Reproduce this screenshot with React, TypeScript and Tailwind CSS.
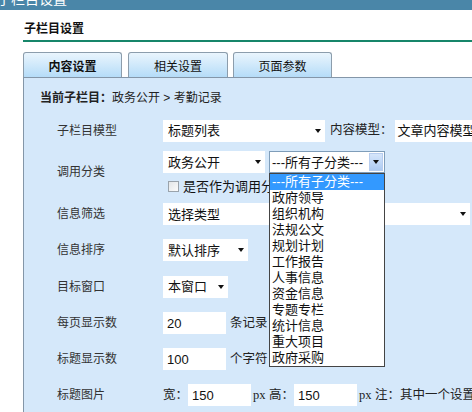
import React from "react";

const Arrow = () => (
  <span className="inline-block shrink-0 w-0 h-0 border-l-[3.5px] border-r-[3.5px] border-t-[4px] border-l-transparent border-r-transparent border-t-[#111]" />
);

function Sel({ w, text }: { w: string; text: string }) {
  return (
    <div className={`${w} shrink-0 h-[22px] bg-white flex items-center justify-between pl-[5px] pr-[4px] text-[13px] text-[#111] leading-none whitespace-nowrap`}>
      <span>{text}</span>
      <Arrow />
    </div>
  );
}

function Inp({ w, text }: { w: string; text: string }) {
  return (
    <div className={`${w} shrink-0 h-[22px] bg-white flex items-center pl-[4px] text-[13px] text-[#111] leading-none`}>
      {text}
    </div>
  );
}

function Row({ h, label, children }: { h: string; label: string; children: React.ReactNode }) {
  return (
    <div className={`${h} flex items-center`}>
      <div className="w-[139px] shrink-0 pl-[33px] text-[12px] text-[#333] leading-none whitespace-nowrap">{label}</div>
      <div className="flex items-center shrink-0">{children}</div>
    </div>
  );
}

const items = [
  "政府领导",
  "组织机构",
  "法规公文",
  "规划计划",
  "工作报告",
  "人事信息",
  "资金信息",
  "专题专栏",
  "统计信息",
  "重大项目",
  "政府采购",
];

const txt = "shrink-0 text-[12.5px] text-[#222] leading-none whitespace-nowrap";

export default function App() {
  return (
    <div className="relative w-[472px] h-[412px] overflow-hidden bg-white font-['Liberation_Sans','Noto_Sans_CJK_SC',sans-serif]">
      <div className="h-[10px] bg-[#4a86a8] overflow-hidden">
        <div className="-mt-[9px] -ml-[3px] text-[14px] leading-[16px] text-white whitespace-nowrap">子栏目设置</div>
      </div>
      <div className="pl-[23px]">
        <div className="h-[30px] pt-[8px] flex items-center pl-[1px] text-[12px] font-bold text-[#111] leading-none">
          子栏目设置
        </div>
        <div className="h-[2px] bg-[#17866a]" />
        <div className="h-[10px]" />
        <div className="flex h-[25px] items-end">
          <div className="w-[99px] h-[25px] border-t border-l border-r border-[#8c9dac] rounded-t-[3px] bg-gradient-to-b from-[#eaf5fd] to-[#b5dcf8] flex items-center justify-center pt-[3px] text-[12px] font-bold text-[#111] leading-none">
            内容设置
          </div>
          <div className="w-[100px] ml-[6px] h-[25px] border-t border-l border-r border-[#8c9dac] rounded-t-[3px] bg-gradient-to-b from-[#eaf5fd] to-[#b5dcf8] flex items-center justify-center pt-[3px] text-[12px] text-[#111] leading-none">
            相关设置
          </div>
          <div className="w-[99px] ml-[5px] h-[25px] border-t border-l border-r border-[#8c9dac] rounded-t-[3px] bg-gradient-to-b from-[#eaf5fd] to-[#b5dcf8] flex items-center justify-center pt-[3px] text-[12px] text-[#111] leading-none">
            页面参数
          </div>
        </div>
        <div className="h-[340px] border-t border-l border-[#8496a8] bg-[#d5e8fa]">
          <div className="h-[35px] pt-[4px] flex items-center pl-[16px] text-[12px] text-[#222] leading-none">
            <span className="font-bold">当前子栏目：</span>
            <span>政务公开 &gt; 考勤记录</span>
          </div>
          <Row h="h-[35px]" label="子栏目模型">
            <Sel w="w-[162px]" text="标题列表" />
            <span className={`ml-[5px] ${txt}`}>内容模型：</span>
            <div className="ml-[2px] shrink-0 w-[100px] h-[22px] bg-white flex items-center pl-[3px] text-[13px] text-[#111] leading-none whitespace-nowrap">
              文章内容模型
            </div>
          </Row>
          <div className="h-[48px] flex items-center">
            <div className="w-[139px] shrink-0 pl-[33px] text-[12px] text-[#333] leading-none">调用分类</div>
            <div className="self-start shrink-0 pt-[3px] flex flex-col">
              <div className="flex">
                <Sel w="w-[102px]" text="政务公开" />
                <div className="ml-[4px] shrink-0 w-[116px] h-[22px] bg-white border border-[#7f9db9] flex items-center justify-between pl-[2px] pr-[1px] text-[13px] text-[#111] leading-none whitespace-nowrap">
                  <span>---所有子分类---</span>
                  <div className="w-[14px] h-[18px] border border-[#b7cdef] bg-gradient-to-b from-[#d6e6fb] to-[#aecbf2] flex items-center justify-center">
                    <Arrow />
                  </div>
                </div>
              </div>
              <div className="mt-[5px] h-[16px] flex items-center pl-[5px]">
                <div className="w-[11px] h-[11px] shrink-0 border border-[#9aa3ab] bg-gradient-to-br from-[#e3e6e8] to-[#fbfbfb]" />
                <span className="ml-[4px] text-[13px] text-[#111] leading-none whitespace-nowrap">是否作为调用分类</span>
              </div>
            </div>
          </div>
          <Row h="h-[36px]" label="信息筛选">
            <Sel w="w-[307px]" text="选择类型" />
          </Row>
          <Row h="h-[36px]" label="信息排序">
            <Sel w="w-[85px]" text="默认排序" />
          </Row>
          <Row h="h-[37px]" label="目标窗口">
            <Sel w="w-[65px]" text="本窗口" />
          </Row>
          <Row h="h-[36px]" label="每页显示数">
            <Inp w="w-[63px]" text="20" />
            <span className={`ml-[4px] ${txt}`}>条记录</span>
          </Row>
          <Row h="h-[36px]" label="标题显示数">
            <Inp w="w-[63px]" text="100" />
            <span className={`ml-[4px] ${txt}`}>个字符</span>
          </Row>
          <Row h="h-[36px]" label="标题图片">
            <span className={txt}>宽：</span>
            <Inp w="w-[63px]" text="150" />
            <span className={`ml-[2px] ${txt}`}>
              <span className="font-['Liberation_Serif',serif]">px</span> 高：
            </span>
            <Inp w="w-[63px]" text="150" />
            <span className={`ml-[2px] ${txt}`}>
              <span className="font-['Liberation_Serif',serif]">px</span> 注：其中一个设置0
            </span>
          </Row>
        </div>
      </div>
      <div className="absolute left-[269px] top-[173px] w-[116px] border border-[#444] bg-white text-[13px] leading-[16px] text-[#111]">
        <div className="h-[16px] bg-[#3399ff] text-white pl-[2px] flex items-center whitespace-nowrap">---所有子分类---</div>
        {items.map((t) => (
          <div key={t} className="h-[16px] pl-[2px] flex items-center">
            {t}
          </div>
        ))}
      </div>
    </div>
  );
}
